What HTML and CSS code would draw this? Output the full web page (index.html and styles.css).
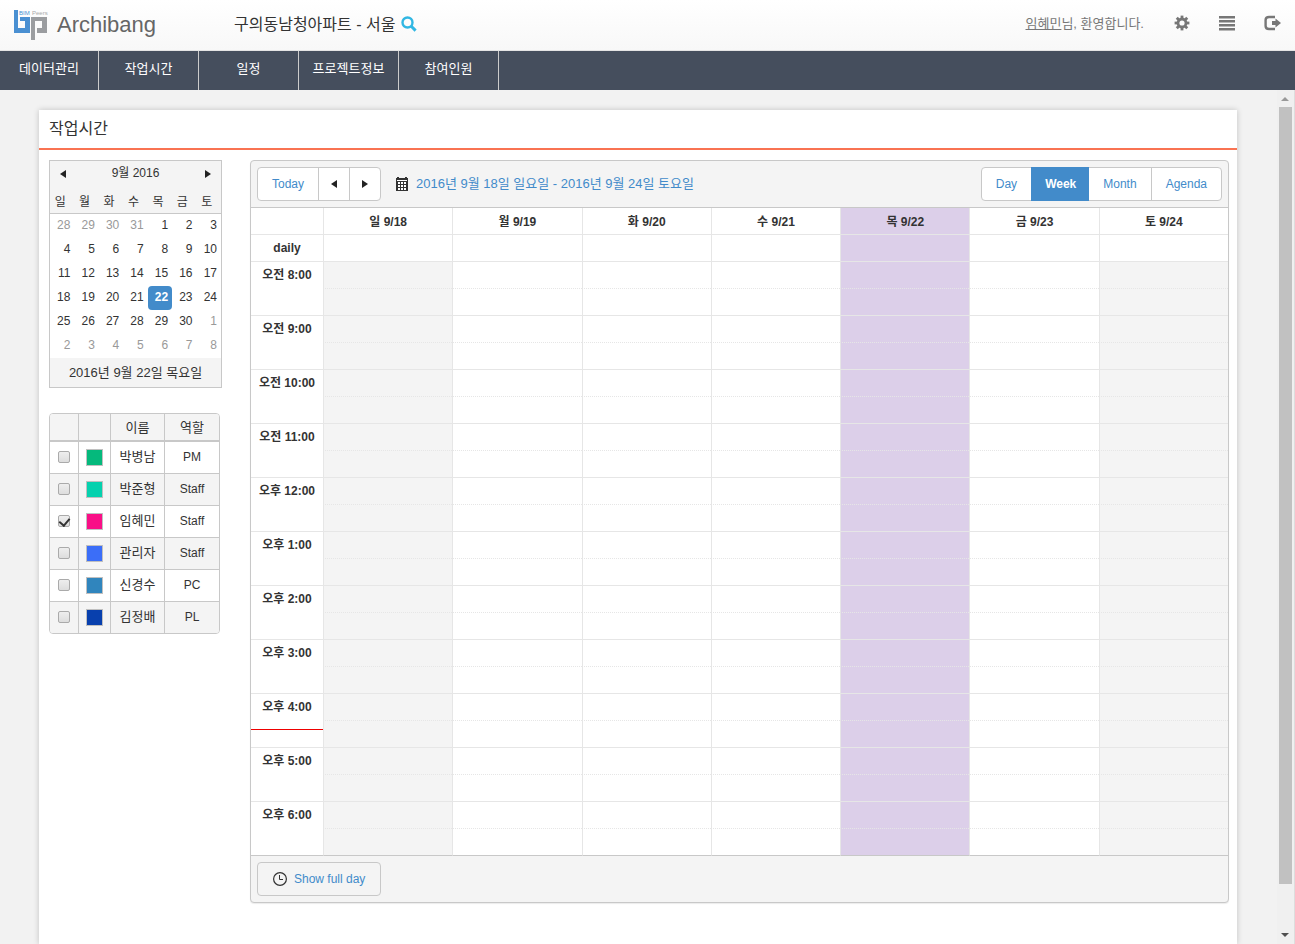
FILE: index.html
```
<!DOCTYPE html>
<html lang="ko">
<head>
	<meta charset="utf-8">
	<meta name="viewport" content="width=device-width, initial-scale=1">
	<title>Archibang - 작업시간</title>
	<link rel="stylesheet" href="styles.css">
</head>
<body>
	<header class="header">
		<a class="logo" href="#" aria-label="Archibang">
			<svg class="logo-mark" width="34" height="31" viewBox="0 0 34 31">
				<path d="M0 0h4v18h7v-7H6V7h10v16H0z" fill="#4a90d2"/>
				<path d="M17 7h16v16H23v-5h5v-7h-7v19h-4z" fill="#9b9da0"/>
				<text x="5" y="5" fill="#4a90d2">BIM</text>
				<text x="18" y="5" fill="#aaa">Peers</text>
			</svg>
			<span class="logo-name">Archibang</span>
		</a>
		<div class="project">
			<span>구의동남청아파트 - 서울</span>
			<button type="button" class="icon-btn" aria-label="검색">
				<svg width="16" height="16" viewBox="0 0 16 16" fill="none" stroke="#31b7e3"><circle cx="6.5" cy="6.5" r="5" stroke-width="2.4"/><path d="M10 10l4.6 4.6" stroke-width="3"/></svg>
			</button>
		</div>
		<div class="user"><a href="#">임혜민</a>님, 환영합니다.</div>
		<div class="tools">
			<button type="button" class="icon-btn" aria-label="설정">
				<svg width="16" height="16" viewBox="0 0 16 16"><g fill="#777"><path d="M6.6 .6h2.8v14.8H6.6z"/><path d="M6.6 .6h2.8v14.8H6.6z" transform="rotate(45 8 8)"/><path d="M6.6 .6h2.8v14.8H6.6z" transform="rotate(90 8 8)"/><path d="M6.6 .6h2.8v14.8H6.6z" transform="rotate(135 8 8)"/><circle cx="8" cy="8" r="5.4"/></g><circle cx="8" cy="8" r="2.6" fill="#fbfbfb"/></svg>
			</button>
			<button type="button" class="icon-btn" aria-label="목록">
				<svg width="16" height="16" viewBox="0 0 16 16" fill="#777"><path d="M0 1h16v2.6H0zM0 5h16v2.6H0zM0 9h16v2.6H0zM0 13h16v2.4H0z"/></svg>
			</button>
			<button type="button" class="icon-btn" aria-label="로그아웃">
				<svg width="17" height="16" viewBox="0 0 17 16"><path d="M11 2H5Q1.600 2 1.600 5v6q0 3 3.400 3h6" fill="none" stroke="#777" stroke-width="2.4"/><path d="M8 6h3.500V3.400L17 8l-5.500 4.600V10H8z" fill="#777"/></svg>
			</button>
		</div>
	</header>

	<nav class="nav">
		<a href="#">데이터관리</a>
		<a href="#">작업시간</a>
		<a href="#">일정</a>
		<a href="#">프로젝트정보</a>
		<a href="#">참여인원</a>
	</nav>

	<div class="page">
		<main class="content">
			<section class="card">
				<h1 class="card-title">작업시간</h1>
				<div class="card-body">

					<aside class="side">
						<div class="cal">
							<div class="cal-head">
								<button type="button" class="arrow prev" aria-label="이전 달"></button>
								<span>9월 2016</span>
								<button type="button" class="arrow next" aria-label="다음 달"></button>
							</div>
							<table class="cal-table">
								<thead>
									<tr><th>일</th><th>월</th><th>화</th><th>수</th><th>목</th><th>금</th><th>토</th></tr>
								</thead>
								<tbody>
									<tr><td class="other">28</td><td class="other">29</td><td class="other">30</td><td class="other">31</td><td>1</td><td>2</td><td>3</td></tr>
									<tr><td>4</td><td>5</td><td>6</td><td>7</td><td>8</td><td>9</td><td>10</td></tr>
									<tr><td>11</td><td>12</td><td>13</td><td>14</td><td>15</td><td>16</td><td>17</td></tr>
									<tr><td>18</td><td>19</td><td>20</td><td>21</td><td class="selected">22</td><td>23</td><td>24</td></tr>
									<tr><td>25</td><td>26</td><td>27</td><td>28</td><td>29</td><td>30</td><td class="other">1</td></tr>
									<tr><td class="other">2</td><td class="other">3</td><td class="other">4</td><td class="other">5</td><td class="other">6</td><td class="other">7</td><td class="other">8</td></tr>
								</tbody>
							</table>
							<div class="cal-foot">2016년 9월 22일 목요일</div>
						</div>

						<table class="members">
							<colgroup><col class="m-check"><col class="m-color"><col class="m-name"><col></colgroup>
							<thead>
								<tr><th></th><th></th><th>이름</th><th>역할</th></tr>
							</thead>
							<tbody>
								<tr><td><input type="checkbox" id="m1"></td><td class="color"><span class="swatch green"></span></td><td><label for="m1">박병남</label></td><td>PM</td></tr>
								<tr><td><input type="checkbox" id="m2"></td><td class="color"><span class="swatch mint"></span></td><td><label for="m2">박준형</label></td><td>Staff</td></tr>
								<tr><td><input type="checkbox" id="m3" checked></td><td class="color"><span class="swatch pink"></span></td><td><label for="m3">임혜민</label></td><td>Staff</td></tr>
								<tr><td><input type="checkbox" id="m4"></td><td class="color"><span class="swatch blue"></span></td><td><label for="m4">관리자</label></td><td>Staff</td></tr>
								<tr><td><input type="checkbox" id="m5"></td><td class="color"><span class="swatch steel"></span></td><td><label for="m5">신경수</label></td><td>PC</td></tr>
								<tr><td><input type="checkbox" id="m6"></td><td class="color"><span class="swatch navy"></span></td><td><label for="m6">김정배</label></td><td>PL</td></tr>
							</tbody>
						</table>
					</aside>

					<div class="scheduler">
						<div class="toolbar">
							<div class="group">
								<button type="button" class="today-btn">Today</button>
								<button type="button" class="arrow prev" aria-label="이전 주"></button>
								<button type="button" class="arrow next" aria-label="다음 주"></button>
							</div>
							<a class="range" href="#">
								<svg width="12" height="14" viewBox="0 0 12 14" shape-rendering="crispEdges"><path d="M0 1h12v13H0z" fill="#333"/><path d="M1 0h2v1H1zM9 0h2v1H9z" fill="#333"/><path d="M1 3h10v1H1z" fill="#fff"/><path d="M2 5h2v2H2zM5 5h2v2H5zM8 5h2v2H8zM2 8h2v2H2zM5 8h2v2H5zM8 8h2v2H8zM2 11h2v2H2zM5 11h2v2H5zM8 11h2v2H8z" fill="#fff"/></svg>
								<span>2016년 9월 18일 일요일 - 2016년 9월 24일 토요일</span>
							</a>
							<div class="group views">
								<button type="button">Day</button>
								<button type="button" class="active">Week</button>
								<button type="button">Month</button>
								<button type="button">Agenda</button>
							</div>
						</div>

						<table class="week">
							<colgroup><col class="time-col"><col span="7"></colgroup>
							<thead>
								<tr class="days"><th></th><th>일 9/18</th><th>월 9/19</th><th>화 9/20</th><th>수 9/21</th><th class="today">목 9/22</th><th>금 9/23</th><th>토 9/24</th></tr>
								<tr><th>daily</th><td></td><td></td><td></td><td></td><td class="today"></td><td></td><td></td></tr>
							</thead>
							<tbody id="slots"></tbody>
						</table>

						<div class="sched-foot">
							<button type="button" class="fullday">
								<svg width="14" height="14" viewBox="0 0 14 14" fill="none" stroke="#333"><circle cx="7" cy="7" r="6.4" stroke-width="1.2"/><path d="M6.5 3v4.5H10"/></svg>
								<span>Show full day</span>
							</button>
						</div>
					</div>

				</div>
			</section>
		</main>
		<div class="scroll">
			<span class="scroll-up"></span>
			<span class="scroll-thumb"></span>
			<span class="scroll-down"></span>
		</div>
	</div>

	<script>
		// two half-hour rows for every working hour
		var html = '';
		for (var h = 8; h <= 18; h++) {
			var label = (h < 12 ? '오전 ' : '오후 ') + (h > 12 ? h - 12 : h) + ':00';
			var now = h == 16 ? '<span class="now"></span>' : '';
			var cells = '';
			for (var d = 0; d < 7; d++) {
				var cls = d == 4 ? 'today' : (d == 0 || d == 6 ? 'off' : '');
				cells += '<td class="' + cls + '"></td>';
			}
			html += '<tr class="half"><th rowspan="2">' + label + now + '</th>' + cells + '</tr><tr>' + cells + '</tr>';
		}
		document.getElementById('slots').innerHTML = html;
	</script>
</body>
</html>
```
FILE: styles.css
```
* {
	box-sizing: border-box;
}
body {
	margin: 0;
	height: 100vh;
	overflow: hidden;
	display: flex;
	flex-direction: column;
	background: #f2f2f2;
	color: #333;
	font-family: "Liberation Sans", "Noto Sans CJK KR", sans-serif;
	font-size: 12px;
	line-height: 16px;
}
button {
	margin: 0;
	padding: 0;
	border: 0;
	background: none;
	font: inherit;
	color: inherit;
	cursor: pointer;
}
a {
	color: inherit;
	text-decoration: none;
}
svg {
	display: block;
}
table {
	border-collapse: separate;
	border-spacing: 0;
	table-layout: fixed;
	width: 100%;
}
th, td {
	padding: 0;
}

/* header */
.header {
	flex: none;
	height: 51px;
	display: flex;
	align-items: center;
	padding: 0 14px;
	background: linear-gradient(#fff, #f8f8f8);
	border-bottom: 1px solid #e4e4e4;
}
.logo {
	width: 220px;
	display: flex;
	align-items: center;
	gap: 9px;
}
.logo-mark {
	overflow: visible;
}
.logo-mark text {
	font-size: 6px;
}
.logo-name {
	font-size: 22px;
	line-height: 28px;
	color: #666;
}
.project {
	display: flex;
	align-items: center;
	gap: 6px;
	font-size: 16px;
	line-height: 24px;
}
.project .icon-btn {
	padding-bottom: 2px;
}
.user {
	margin-left: auto;
	padding-bottom: 2px;
	font-size: 13px;
	color: #777;
}
.user a {
	text-decoration: underline;
}
.tools {
	display: flex;
	gap: 29px;
	margin-left: 30px;
	padding-bottom: 4px;
}

/* main menu */
.nav {
	flex: none;
	height: 39px;
	display: flex;
	background: #454e5d;
}
.nav a {
	width: 100px;
	border-right: 1px solid #ccc;
	color: #fff;
	font-size: 13px;
	line-height: 36px;
	text-align: center;
}
.nav a:first-child {
	width: 99px;
}

/* page */
.page {
	flex: 1;
	min-height: 0;
	display: flex;
}
.content {
	flex: 1;
	padding: 20px 40px 0 39px;
	display: flex;
}
.card {
	flex: 1;
	background: #fff;
	box-shadow: 0 0 6px rgba(0, 0, 0, .2);
}
.card-title {
	margin: 0;
	padding: 0 10px;
	border-bottom: 2px solid #f97352;
	font-size: 16px;
	font-weight: normal;
	line-height: 38px;
}
.card-body {
	display: flex;
	align-items: flex-start;
	gap: 28px;
	padding: 10px 8px 0 10px;
}
.side {
	flex: none;
	width: 173px;
}

.arrow::before {
	content: "";
	display: block;
	margin: 0 auto;
	width: 0;
	border: solid transparent;
	border-width: 4px 0;
}
.arrow.prev::before {
	border-right: 6px solid #222;
}
.arrow.next::before {
	border-left: 6px solid #222;
}

/* month calendar */
.cal {
	border: 1px solid #c8c8c8;
	background: #fff;
}
.cal-head {
	display: flex;
	justify-content: space-between;
	background: #f4f4f4;
	line-height: 24px;
	height: 28px;
}
.cal-head .arrow {
	width: 26px;
	height: 26px;
}
.cal-table th {
	height: 25px;
	padding: 2px 4px 0 0;
	background: #f4f4f4;
	border-bottom: 1px solid #c8c8c8;
	font-weight: normal;
}
.cal-table td {
	height: 24px;
	padding: 0 4px 2px 0;
	text-align: right;
}
.cal-table .other {
	color: #999;
}
.cal-table .selected {
	background: #428bca;
	border-radius: 4px;
	color: #fff;
	font-weight: bold;
}
.cal-foot {
	background: #f4f4f4;
	font-size: 13px;
	line-height: 29px;
	text-align: center;
}

/* members */
.members {
	width: 171px;
	margin-top: 25px;
	border: 1px solid #c8c8c8;
	border-radius: 4px;
	overflow: hidden;
	text-align: center;
}
.m-check {
	width: 28px;
}
.m-color {
	width: 32px;
}
.m-name {
	width: 54px;
}
.members th {
	height: 28px;
	padding-top: 2px;
	background: #f4f4f4;
	border-bottom: 2px solid #c8c8c8;
	font-size: 13px;
	font-weight: normal;
}
.members td {
	height: 32px;
	padding-bottom: 2px;
	border-bottom: 1px solid #c8c8c8;
}
.members .color {
	padding-bottom: 0;
}
.members label {
	font-size: 13px;
}
.members th + th,
.members td + td {
	border-left: 1px solid #c8c8c8;
}
.members tr:last-child td {
	height: 31px;
	border-bottom: 0;
}
.members tbody tr:nth-child(even) {
	background: #f4f4f4;
}
.members input {
	appearance: none;
	display: block;
	width: 12px;
	height: 12px;
	margin: 0 auto;
	border: 1px solid #aaa;
	border-radius: 2px;
	background: linear-gradient(#eee, #ddd);
}
.members input:checked::before {
	content: "";
	display: block;
	width: 5px;
	height: 8px;
	margin: 0 auto;
	border: solid #333;
	border-width: 0 2px 2px 0;
	transform: rotate(40deg);
}
.swatch {
	display: block;
	width: 17px;
	height: 17px;
	margin: 0 auto;
	border: 1px solid #c0c0c0;
}
.green { background: #05b97c; }
.mint { background: #05d1ae; }
.pink { background: #f90f87; }
.blue { background: #3b6ef8; }
.steel { background: #3085bd; }
.navy { background: #0840ae; }

/* scheduler */
.scheduler {
	flex: 1;
	min-width: 0;
	border: 1px solid #c8c8c8;
	border-radius: 4px;
	background: #f4f4f4;
	box-shadow: 0 1px 1px rgba(0, 0, 0, .08);
}
.toolbar {
	display: flex;
	align-items: center;
	padding: 6px;
	border-bottom: 1px solid #c8c8c8;
}
.group {
	display: flex;
	border: 1px solid #c8c8c8;
	border-radius: 4px;
	background: #fff;
	color: #428bca;
}
.group button {
	height: 32px;
	padding: 0 14px;
}
.group button + button {
	border-left: 1px solid #c8c8c8;
}
.group .arrow {
	padding: 0;
	width: 31px;
}
.views {
	margin-left: auto;
}
.group .active {
	margin: -1px 0;
	padding: 0 13px;
	height: 34px;
	background: #428bca;
	border-color: #428bca;
	color: #fff;
	font-weight: bold;
}
.group .active + button {
	border-left: 0;
}
.range {
	display: flex;
	align-items: center;
	gap: 8px;
	margin-left: 15px;
	font-size: 13px;
	color: #428bca;
}
.week {
	background: #fff;
}
.time-col {
	width: 72px;
}
.week th,
.week td {
	height: 27px;
	border-bottom: 1px solid #e6e6e6;
}
.week th + th,
.week td {
	border-left: 1px solid #e6e6e6;
}
.week .days th {
	padding-top: 2px;
}
.week tbody th {
	position: relative;
	padding-top: 5px;
	vertical-align: top;
}
.week .half td {
	border-bottom-style: dotted;
}
.week .off {
	background: #f4f4f4;
}
.week .today {
	background: #dccfe9;
}
.week tbody tr:last-child td,
.week tbody tr:nth-last-child(2) th {
	border-bottom-color: #c8c8c8;
}
.now {
	position: absolute;
	left: 0;
	right: 0;
	top: 35px;
	height: 1px;
	background: #e00;
}
.sched-foot {
	padding: 6px;
}
.fullday {
	display: flex;
	align-items: center;
	gap: 7px;
	height: 34px;
	padding: 0 15px;
	border: 1px solid #c8c8c8;
	border-radius: 4px;
	color: #428bca;
}

/* scroll rail */
.scroll {
	flex: none;
	width: 18px;
	display: flex;
	flex-direction: column;
	align-items: center;
	padding: 7px 1px 7px 0;
	background: #f0f0f0;
	border-right: 1px solid #ddd;
}
.scroll-up,
.scroll-down {
	border: solid transparent;
	border-width: 0 4px;
}
.scroll-up {
	border-bottom: 4px solid #999;
	margin-bottom: 6px;
}
.scroll-thumb {
	flex: 1;
	width: 13px;
	margin-bottom: 49px;
	background: #c1c1c1;
}
.scroll-down {
	border-top: 4px solid #505050;
}
```
